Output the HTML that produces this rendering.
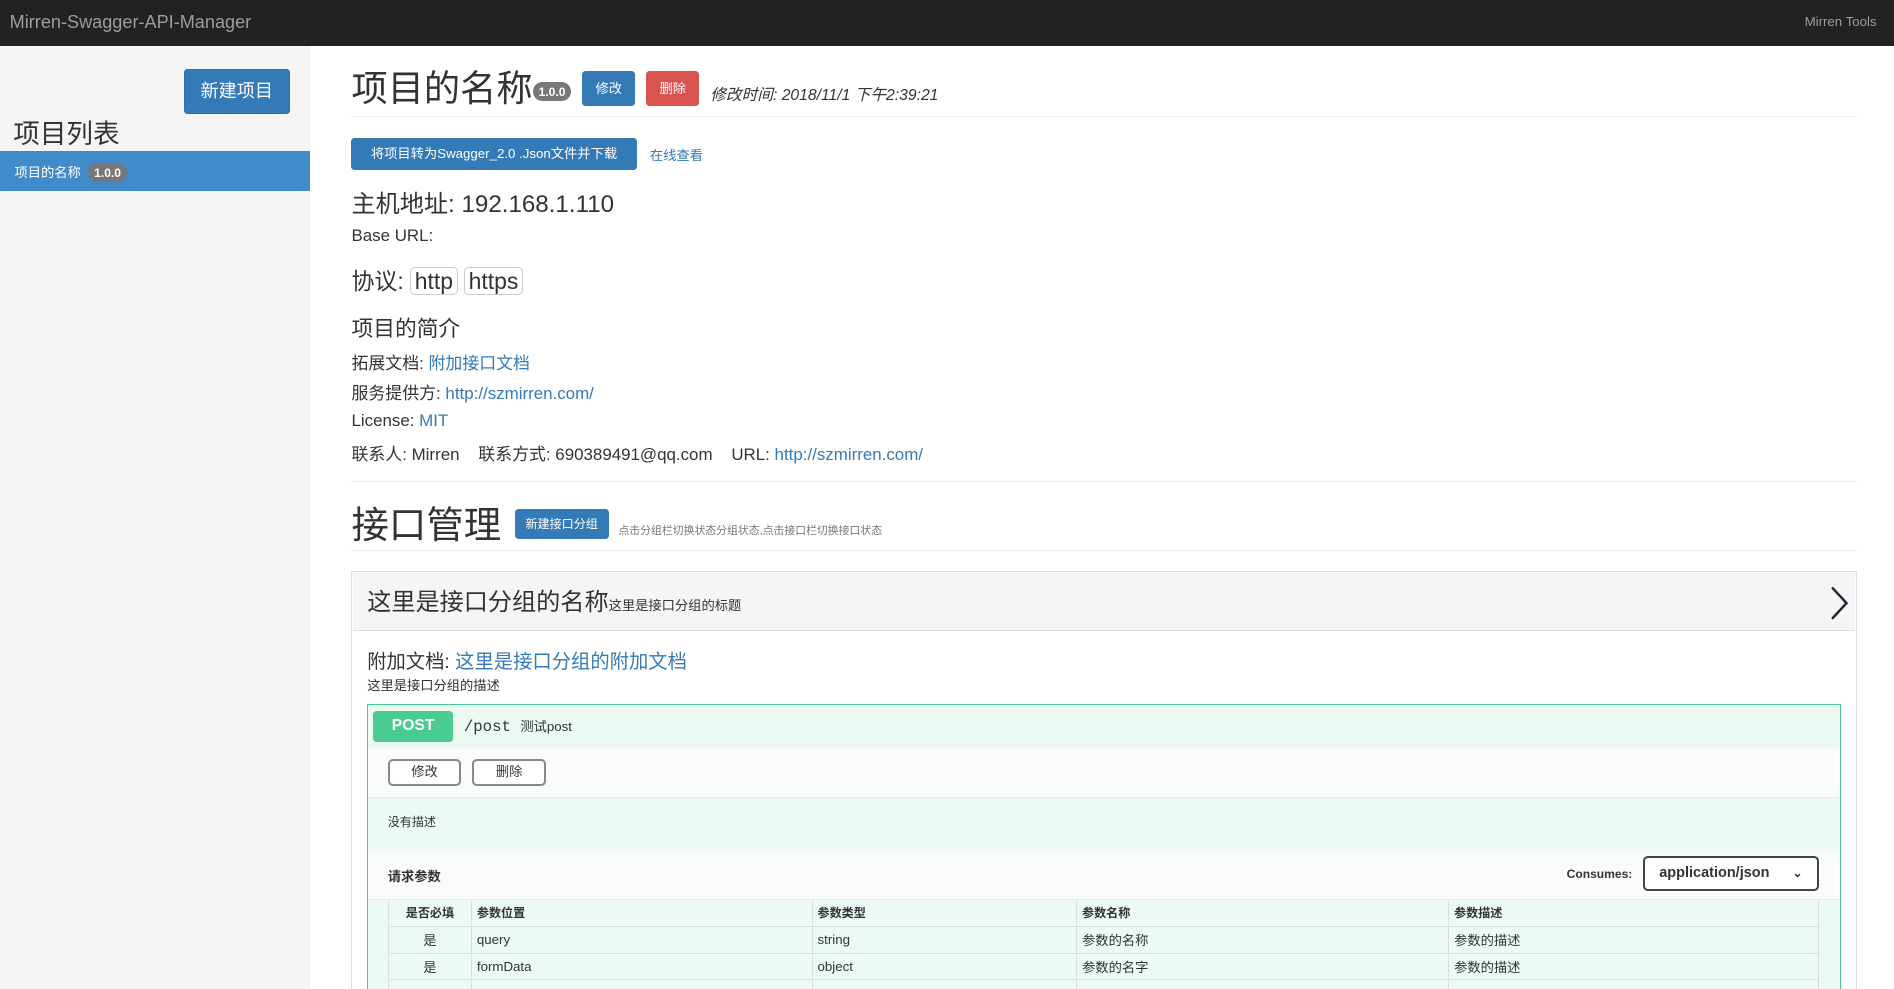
<!DOCTYPE html>
<html><head><meta charset="utf-8"><style>
*{box-sizing:border-box;margin:0;padding:0}
html,body{width:1894px;height:989px;overflow:hidden;background:#fff}
#r{zoom:1.2079;position:relative;width:1568px;height:819px;font-family:"Liberation Sans","Noto Sans CJK SC",sans-serif;color:#333}
.a{position:absolute;white-space:nowrap}
.btn{position:absolute;color:#fff;border-radius:3px;text-align:center}
a{color:#337ab7;text-decoration:none}
.hr{position:absolute;left:291px;width:1246px;height:1px;background:#eee}
.badge{display:inline-block;background:#777;color:#fff;border-radius:9px;font-weight:bold}
td{border-bottom:1px solid #ddd;border-left:1px solid #ddd;padding:0 4px;font-size:11px;height:22px}
</style></head><body><div id="r">
<div class="a" style="left:0;top:0;width:1568px;height:38px;background:#222"></div>
<div class="a" style="left:8px;top:10px;font-size:15px;color:#9d9d9d">Mirren-Swagger-API-Manager</div>
<div class="a" style="left:1494px;top:12px;font-size:11px;color:#9d9d9d">Mirren Tools</div>
<div class="a" style="left:0;top:38px;width:257px;height:781px;background:#f5f5f5;border-right:1px solid #eee"></div>
<div class="btn" style="left:152px;top:57px;width:88px;height:37px;background:#337ab7;border:1px solid #2e6da4;font-size:15px;line-height:35px">新建项目</div>
<div class="a" style="left:11px;top:93px;font-size:22px">项目列表</div>
<div class="a" style="left:0;top:125px;width:257px;height:33px;background:#428bca"></div>
<div class="a" style="left:12px;top:134px;font-size:11px;color:#fff">项目的名称 <span class="badge" style="font-size:10px;padding:2px 5px;margin-left:3px">1.0.0</span></div>

<div class="a" style="left:291px;top:50px;font-size:30px">项目的名称<span class="badge" style="font-size:10px;padding:2px 5px;vertical-align:middle">1.0.0</span></div>
<div class="btn" style="left:482px;top:59px;width:44px;height:29px;background:#337ab7;font-size:11px;line-height:29px">修改</div>
<div class="btn" style="left:535px;top:59px;width:44px;height:29px;background:#d9534f;font-size:11px;line-height:29px">删除</div>
<div class="a" style="left:588px;top:68px;font-size:13px;font-style:italic">修改时间: 2018/11/1 下午2:39:21</div>
<div class="hr" style="top:96px"></div>
<div class="btn" style="left:291px;top:114px;width:236px;height:27px;background:#337ab7;font-size:11px;line-height:27px">将项目转为Swagger_2.0 .Json文件并下载</div>
<div class="a" style="left:538px;top:120px;font-size:11px"><a>在线查看</a></div>
<div class="a" style="left:291px;top:152px;font-size:20px">主机地址: 192.168.1.110</div>
<div class="a" style="left:291px;top:187px;font-size:14px">Base URL:</div>
<div class="a" style="left:291px;top:217px;font-size:19px">协议: <span style="border:1px solid #ccc;border-radius:4px;padding:0 3px">http</span> <span style="border:1px solid #ccc;border-radius:4px;padding:0 3px">https</span></div>
<div class="a" style="left:291px;top:258px;font-size:18px">项目的简介</div>
<div class="a" style="left:291px;top:289px;font-size:14px">拓展文档: <a>附加接口文档</a></div>
<div class="a" style="left:291px;top:314px;font-size:14px">服务提供方: <a>http://szmirren.com/</a></div>
<div class="a" style="left:291px;top:340px;font-size:14px">License: <a>MIT</a></div>
<div class="a" style="left:291px;top:364px;font-size:14px">联系人: Mirren &nbsp;&nbsp; 联系方式: 690389491@qq.com &nbsp;&nbsp; URL: <a>http://szmirren.com/</a></div>
<div class="hr" style="top:398px"></div>
<div class="a" style="left:291px;top:410px;font-size:31px">接口管理</div>
<div class="btn" style="left:426px;top:421px;width:78px;height:25px;background:#337ab7;font-size:10px;line-height:25px">新建接口分组</div>
<div class="a" style="left:512px;top:432px;font-size:9px;color:#777">点击分组栏切换状态分组状态,点击接口栏切换接口状态</div>
<div class="hr" style="top:455px"></div>

<div class="a" style="left:291px;top:473px;width:1246px;height:346px;border:1px solid #ddd;border-bottom:none"></div>
<div class="a" style="left:292px;top:474px;width:1244px;height:48px;background:#f5f5f5;border-bottom:1px solid #ddd"></div>
<div class="a" style="left:304px;top:482px;font-size:20px">这里是接口分组的名称<span style="font-size:11px">这里是接口分组的标题</span></div>
<svg class="a" style="left:1512px;top:484px" width="20" height="30"><path d="M5 2 L17 15 L5 28" fill="none" stroke="#223" stroke-width="2"/></svg>
<div class="a" style="left:304px;top:535px;font-size:16px">附加文档: <a>这里是接口分组的附加文档</a></div>
<div class="a" style="left:304px;top:559px;font-size:11px">这里是接口分组的描述</div>

<div class="a" style="left:304px;top:583px;width:1220px;height:236px;border:1px solid #49cc90;border-bottom:none;background:#edf9f3"></div>
<div class="btn" style="left:309px;top:589px;width:66px;height:25px;background:#49cc90;font-size:13px;font-weight:bold;line-height:25px">POST</div>
<div class="a" style="left:384px;top:593px;font-size:13px;font-family:'Liberation Mono',monospace">/post <span style="font-family:'Liberation Sans','Noto Sans CJK SC',sans-serif;font-size:11px">测试post</span></div>
<div class="a" style="left:305px;top:619px;width:1218px;height:42px;background:#fafcfb;border-bottom:1px solid #e4ece8"></div>
<div class="a" style="left:321px;top:628px;width:61px;height:23px;border:2px solid #888;border-radius:4px;background:#fff;font-size:11px;text-align:center;line-height:19px">修改</div>
<div class="a" style="left:391px;top:628px;width:61px;height:23px;border:2px solid #888;border-radius:4px;background:#fff;font-size:11px;text-align:center;line-height:19px">删除</div>
<div class="a" style="left:321px;top:673px;font-size:10px">没有描述</div>
<div class="a" style="left:305px;top:703px;width:1218px;height:42px;background:#fafcfb;border-bottom:1px solid #e4ece8"></div>
<div class="a" style="left:321px;top:717px;font-size:11px;font-weight:bold">请求参数</div>
<div class="a" style="left:1297px;top:718px;font-size:10px;font-weight:bold">Consumes:</div>
<div class="a" style="left:1360px;top:709px;width:146px;height:29px;border:2px solid #41444e;border-radius:4px;background:#fff;font-size:12px;font-weight:bold;line-height:25px;padding-left:12px">application/json<span style="position:absolute;right:12px;font-size:10px">&#8964;</span></div>
<table class="a" style="left:321px;top:745px;width:1185px;border-collapse:collapse;border-right:1px solid #ddd">
<tr style="font-weight:bold"><td style="width:69px;text-align:center;font-size:10px">是否必填</td><td style="width:282px;font-size:10px">参数位置</td><td style="width:219px;font-size:10px">参数类型</td><td style="width:308px;font-size:10px">参数名称</td><td style="font-size:10px">参数描述</td></tr>
<tr><td style="text-align:center">是</td><td>query</td><td>string</td><td>参数的名称</td><td>参数的描述</td></tr>
<tr><td style="text-align:center">是</td><td>formData</td><td>object</td><td>参数的名字</td><td>参数的描述</td></tr>
<tr><td></td><td></td><td></td><td></td><td></td></tr>
</table>
</div></body></html>
